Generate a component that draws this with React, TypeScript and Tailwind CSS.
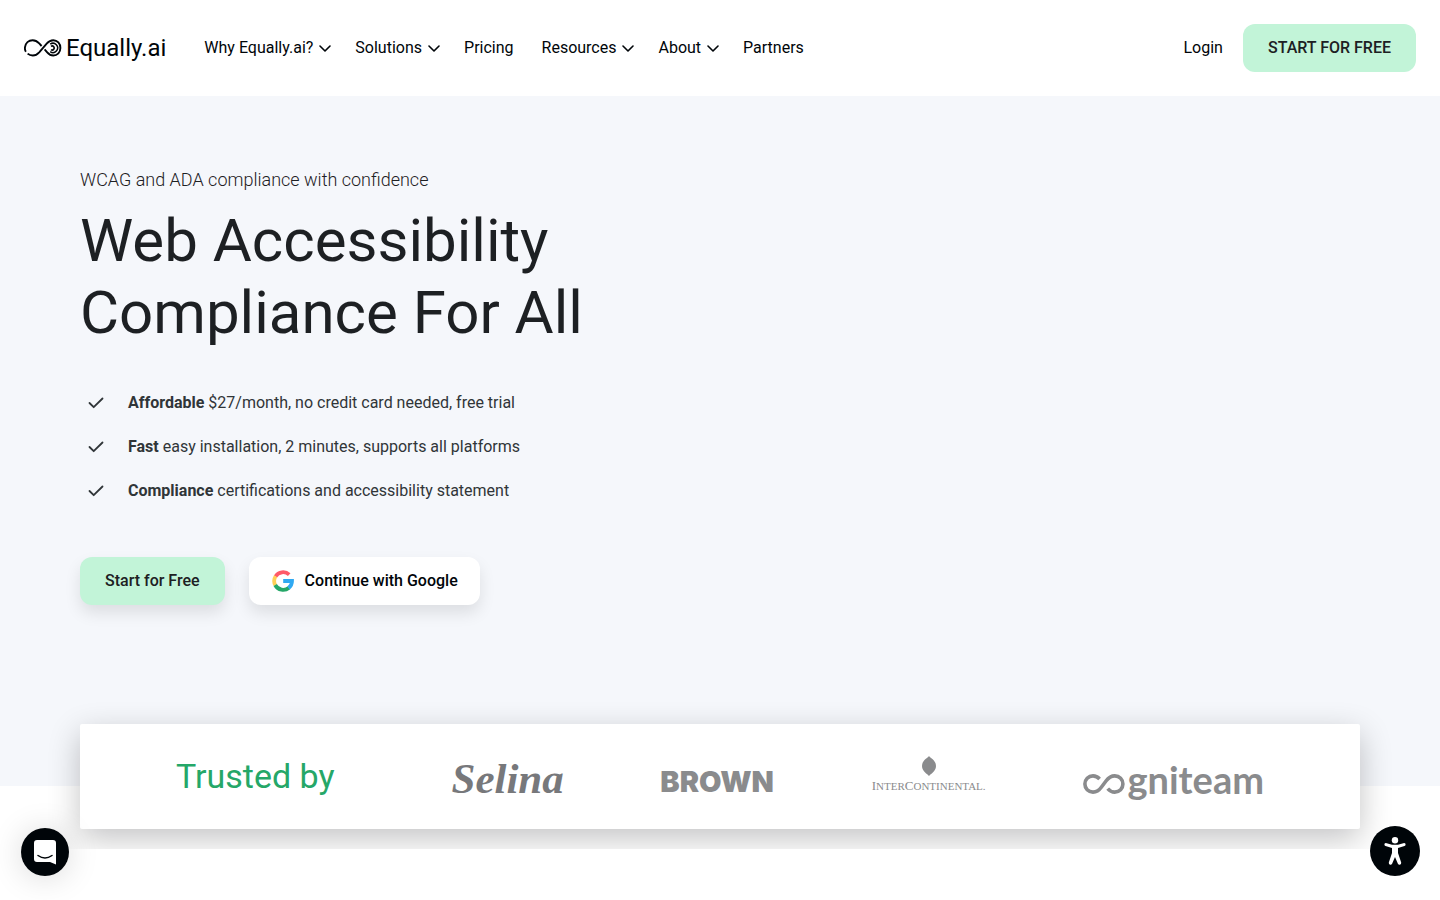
import React from "react";

function Chevron() {
  return (
    <svg width="12" height="8" viewBox="0 0 12 8" fill="none" stroke="currentColor" strokeWidth="1.6" strokeLinecap="round" strokeLinejoin="round" aria-hidden="true">
      <path d="M1 2 L6 7 L11 2" />
    </svg>
  );
}

function Check() {
  return (
    <svg width="16" height="12" viewBox="0 0 16 12" fill="none" stroke="currentColor" strokeWidth="1.8" strokeLinecap="round" strokeLinejoin="round" aria-hidden="true">
      <path d="M1.5 6 L5.7 10.2 L14.5 1.5" />
    </svg>
  );
}

function BrandMark() {
  return (
    <svg width="38" height="18" viewBox="0 0 38 18" fill="none" stroke="#000509" strokeLinecap="butt" aria-hidden="true">
      <path d="M1.9 12.8 C0.9 11.4 0.8 9.6 1 8.2 C1.5 4.2 4.6 1.2 8.6 1.2 C11.2 1.2 13.2 2.3 15.2 4.4 L17.6 7 M20.6 10.4 L23.2 13.3 C25 15.4 26.9 16.5 29.3 16.5 C33.4 16.5 36.4 13.2 36.4 9 C36.4 4.7 33.4 1.2 29.3 1.2 C26.7 1.2 24.7 2.3 22.9 4.4 L15.2 13.3 C13.3 15.4 11.2 16.5 8.8 16.5 C6.8 16.5 5 15.8 3.6 14.6" strokeWidth="1.9" />
      <path d="M26.2 5.2 A4.6 4.6 0 1 1 26.2 12.6" strokeWidth="1.5" />
      <path d="M27 7.4 A2 2 0 1 1 27 10.6" strokeWidth="1.6" />
    </svg>
  );
}

function GoogleMark() {
  return (
    <svg width="24" height="24" viewBox="0 0 24 24" fill="none" strokeWidth="3.8" aria-hidden="true">
      <path d="M18.2 5.6 A9 9 0 0 0 4.5 7.4" stroke="#ff5a69" />
      <path d="M4.6 7.2 A9 9 0 0 0 4.3 16.2" stroke="#ffd057" />
      <path d="M4.2 16 A9 9 0 0 0 18 18.7" stroke="#25a768" />
      <path d="M12.2 12 H21 A9 9 0 0 1 17.6 19" stroke="#30a9f2" />
    </svg>
  );
}

const links = [
  { label: "Why Equally.ai?", menu: true },
  { label: "Solutions", menu: true },
  { label: "Pricing", menu: false },
  { label: "Resources", menu: true },
  { label: "About", menu: true },
  { label: "Partners", menu: false },
];

const points = [
  { lead: "Affordable", rest: "$27/month, no credit card needed, free trial" },
  { lead: "Fast", rest: "easy installation, 2 minutes, supports all platforms" },
  { lead: "Compliance", rest: "certifications and accessibility statement" },
];

function Header() {
  return (
    <header className="flex h-24 items-center justify-between bg-white px-6 text-[#000509]">
      <div className="flex items-center">
        <a href="#home" className="mr-[38px] flex items-center gap-1 text-2xl">
          <BrandMark />
          <span>Equally.ai</span>
        </a>
        <nav className="flex items-center gap-7" aria-label="Main">
          {links.map((l) =>
            l.menu ? (
              <button key={l.label} type="button" className="-mr-1 flex items-center gap-1.5 whitespace-nowrap">
                {l.label}
                <Chevron />
              </button>
            ) : (
              <a key={l.label} href={"#" + l.label.toLowerCase()}>{l.label}</a>
            )
          )}
        </nav>
      </div>
      <div className="flex items-center gap-5">
        <a href="#login">Login</a>
        <button type="button" className="h-12 rounded-xl bg-[#c2f4d8] px-[25px] font-medium text-[#1d2023]">START FOR FREE</button>
      </div>
    </header>
  );
}

function Selina() {
  return <span className="w-28 pt-1 font-['Liberation_Serif',serif] text-[43px] leading-none font-bold text-[#77787b] italic">Selina</span>;
}

function Brown() {
  return <span className="w-[114px] pt-2.5 font-['Inter',sans-serif] text-[29px] leading-none font-black text-[#8a8b8d]">BROWN</span>;
}

function InterContinental() {
  return (
    <span className="flex w-[115px] flex-col items-center pb-1.5 text-[#8a8b8d]">
      <svg width="14" height="20" viewBox="0 0 14 20" fill="currentColor" aria-hidden="true">
        <path d="M7 0 C8.5 2 14 4.5 14 10 C14 15.5 8.5 18 7 20 C5.500 18 0 15.500 0 10 C0 4.500 5.500 2 7 0Z" />
      </svg>
      <span className="mt-1 font-['Liberation_Serif',serif] text-[13px] leading-3 whitespace-nowrap">
        I<span className="text-[11px]">NTER</span>C<span className="text-[11px]">ONTINENTAL.</span>
      </span>
    </span>
  );
}

function Cogniteam() {
  return (
    <span className="flex w-[181px] items-baseline justify-between pt-1 text-[#8a8b8d]">
      <svg width="42" height="20" viewBox="0 0 42 20" fill="none" stroke="currentColor" strokeWidth="3.6" role="img" aria-label="co">
        <path d="M16.6 5 C14.8 3 12.700 1.900 10 1.900 C5.300 1.900 1.900 5.400 1.900 10 C1.900 14.600 5.300 18.100 10 18.100 C14 18.100 16.500 15.800 18.500 13 L23 7 C25.300 4 27.800 1.900 31.800 1.900 C36.500 1.900 39.900 5.400 39.900 10 C39.900 14.600 36.500 18.100 31.800 18.100 C28.700 18.100 26.500 16.800 24.700 14.600" />
      </svg>
      <span className="font-['Lato',sans-serif] text-[38px] leading-none font-bold">gniteam</span>
    </span>
  );
}

export default function App() {
  return (
    <div className="min-h-screen bg-white font-['Roboto',sans-serif] text-base text-[#000509]">
      <Header />
      <main className="overflow-hidden bg-[linear-gradient(to_top,#ffffff_63px,#f5f7fb_63px)] px-20 pt-[70px] pb-5">
        <p className="text-lg leading-7 font-light text-[#1d2023]">WCAG and ADA compliance with confidence</p>
        <h1 className="mt-[11px] text-[60px] leading-[72px] text-[#1d2023]">
          Web Accessibility
          <br />
          Compliance For All
        </h1>
        <ul className="mt-[42px] flex flex-col gap-5 pl-2 text-[#303538]">
          {points.map((p) => (
            <li key={p.lead} className="flex items-center gap-6">
              <Check />
              <span><b>{p.lead}</b> {p.rest}</span>
            </li>
          ))}
        </ul>
        <div className="mt-[54px] flex gap-6">
          <button type="button" className="h-12 rounded-xl bg-[#c2f4d8] px-[25px] font-medium text-[#1d2023] shadow-[0_8px_16px_rgba(0,5,9,0.1)]">Start for Free</button>
          <button type="button" className="flex h-12 items-center gap-2.5 rounded-xl bg-white px-[22px] font-medium shadow-[0_8px_16px_rgba(0,5,9,0.1)]">
            <GoogleMark />
            Continue with Google
          </button>
        </div>
        <section className="mt-[119px] flex h-[105px] items-center justify-between rounded-xs bg-white px-24 shadow-[0_10px_32px_rgba(0,5,9,0.24)]">
          <h2 className="pr-5 text-[34px] whitespace-nowrap text-[#25a768]">Trusted by</h2>
          <Selina />
          <Brown />
          <InterContinental />
          <Cogniteam />
        </section>
      </main>
      <button type="button" aria-label="Open chat" className="fixed bottom-6 left-[21px] flex size-12 items-center justify-center rounded-full bg-[#000509] shadow-[0_2px_32px_rgba(0,0,0,0.15)]">
        <svg width="22" height="25" viewBox="0 0 22 25" fill="none" aria-hidden="true">
          <path d="M3 0 H19 Q22 0 22 3 V24.500 L16 22 H3 Q0 22 0 19 V3 Q0 0 3 0Z" fill="#fff" />
          <path d="M4 15.500 Q11 20.500 18 15.500" stroke="#000509" strokeWidth="1.500" strokeLinecap="round" />
        </svg>
      </button>
      <button type="button" aria-label="Accessibility options" className="fixed right-5 bottom-6 flex size-[50px] items-center justify-center rounded-full bg-[#000509]">
        <svg width="22" height="30" viewBox="0 0 22 30" fill="#fff" aria-hidden="true">
          <circle cx="11" cy="4.200" r="3.200" />
          <path d="M1.800 7 L8 8.700 H14 L20.200 7 Q21.800 7.200 21.600 8.800 Q21.500 9.600 20.500 9.900 L14 11.900 V17 L17.200 26.500 Q17.400 28.300 15.900 28.800 Q14.500 29 13.900 27.800 L11 21 L8.100 27.800 Q7.500 29 6.100 28.800 Q4.600 28.300 4.800 26.500 L8 17 V11.900 L1.500 9.900 Q0.500 9.600 0.400 8.800 Q0.200 7.200 1.800 7Z" />
        </svg>
      </button>
    </div>
  );
}
